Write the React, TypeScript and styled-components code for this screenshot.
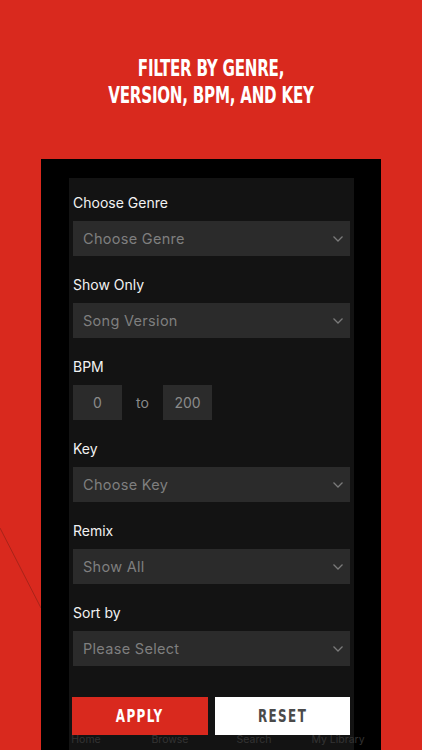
import React from "react";
import styled, { createGlobalStyle } from "styled-components";

const Global = createGlobalStyle`
  html, body { margin: 0; padding: 0; background: #d9291e; }
  #root { width: 422px; height: 750px; }
`;

const Page = styled.div`
  position: relative;
  width: 422px;
  height: 750px;
  overflow: hidden;
  background: #d9291e;
  display: flex;
  flex-direction: column;
  align-items: flex-start;
`;

const Streak = styled.svg`
  position: absolute;
  left: 0;
  top: 520px;
  width: 45px;
  height: 100px;
  pointer-events: none;
`;

const Title = styled.h1`
  margin: 0;
  width: 100%;
  height: 159px;
  box-sizing: border-box;
  padding-top: 56px;
  text-align: center;
  color: #fff;
  font-family: "DejaVu Sans Condensed", "DejaVu Sans", sans-serif;
  font-weight: bold;
  font-size: 21px;
  line-height: 26px;
  letter-spacing: -0.3px;
  transform: scale(0.8, 1.06);
`;

const Frame = styled.div`
  margin-left: 41px;
  width: 340px;
  flex: 1;
  background: #000;
  box-sizing: border-box;
  padding: 19px 28px 0;
  display: flex;
  position: relative;
`;

const Panel = styled.div`
  flex: 1;
  background: #131313;
  box-sizing: border-box;
  padding: 16px 4px 0;
  display: flex;
  flex-direction: column;
`;

const Group = styled.div`
  display: flex;
  flex-direction: column;
  gap: 9px;
  margin-bottom: 20px;
`;

const Label = styled.div`
  color: #f2f2f2;
  font-family: "Inter", "Noto Sans", sans-serif;
  font-size: 14px;
  line-height: 18px;
`;

const Select = styled.div`
  height: 35px;
  background: #2b2b2b;
  display: flex;
  align-items: center;
  justify-content: space-between;
  padding: 0 6px 0 10px;
  color: #7f7f7f;
  font-family: "Inter", "Noto Sans", sans-serif;
  font-size: 14.5px;
  letter-spacing: 0.3px;
`;

const Range = styled.div`
  display: flex;
  align-items: center;
`;

const NumBox = styled.div`
  width: 49px;
  height: 35px;
  background: #2b2b2b;
  display: flex;
  align-items: center;
  justify-content: center;
  color: #8a8a8a;
  font-family: "Inter", "Noto Sans", sans-serif;
  font-size: 14px;
`;

const To = styled.span`
  width: 41px;
  text-align: center;
  color: #8a8a8a;
  font-family: "Inter", "Noto Sans", sans-serif;
  font-size: 14px;
`;

const Buttons = styled.div`
  position: relative;
  z-index: 2;
  margin-top: 11px;
  margin-left: -1px;
  display: flex;
  gap: 7px;
`;

const Button = styled.button<{ $primary?: boolean }>`
  width: ${(p) => (p.$primary ? 136 : 135)}px;
  height: 38px;
  border: none;
  padding: 0;
  background: ${(p) => (p.$primary ? "#d9291e" : "#ffffff")};
  color: ${(p) => (p.$primary ? "#ffffff" : "#4a4a4a")};
  font-family: "DejaVu Sans Condensed", "DejaVu Sans", sans-serif;
  font-weight: bold;
  font-size: 17px;
  letter-spacing: 1.8px;
  display: flex;
  align-items: center;
  justify-content: center;
`;

const ButtonText = styled.span`
  display: inline-block;
  transform: scale(0.78, 1.05);
`;

const TabBar = styled.div`
  position: absolute;
  left: 3px;
  width: 336px;
  top: 574px;
  z-index: 1;
  display: grid;
  grid-template-columns: repeat(4, 1fr);
  text-align: center;
  color: #333333;
  font-family: "Inter", "Noto Sans", sans-serif;
  font-size: 10.5px;
  line-height: 14px;
`;

const Chevron = () => (
  <svg width="12" height="8" viewBox="0 0 12 8">
    <path d="M1.5 1.5 L6 6 L10.5 1.5" fill="none" stroke="#7a7a7a" strokeWidth="1.3" />
  </svg>
);

const SelectField = ({ label, value }: { label: string; value: string }) => (
  <Group>
    <Label>{label}</Label>
    <Select>
      <span>{value}</span>
      <Chevron />
    </Select>
  </Group>
);

export default function App() {
  return (
    <Page>
      <Global />
      <Streak viewBox="0 0 45 100">
        <path d="M0 8 L41 88" stroke="#a8241a" strokeWidth="1" fill="none" />
      </Streak>
      <Title>
        FILTER BY GENRE,
        <br />
        VERSION, BPM, AND KEY
      </Title>
      <Frame>
        <Panel>
          <SelectField label="Choose Genre" value="Choose Genre" />
          <SelectField label="Show Only" value="Song Version" />
          <Group>
            <Label>BPM</Label>
            <Range>
              <NumBox>0</NumBox>
              <To>to</To>
              <NumBox>200</NumBox>
            </Range>
          </Group>
          <SelectField label="Key" value="Choose Key" />
          <SelectField label="Remix" value="Show All" />
          <SelectField label="Sort by" value="Please Select" />
          <Buttons>
            <Button $primary>
              <ButtonText>APPLY</ButtonText>
            </Button>
            <Button>
              <ButtonText>RESET</ButtonText>
            </Button>
          </Buttons>
        </Panel>
        <TabBar>
          <span>Home</span>
          <span>Browse</span>
          <span>Search</span>
          <span>My Library</span>
        </TabBar>
      </Frame>
    </Page>
  );
}
